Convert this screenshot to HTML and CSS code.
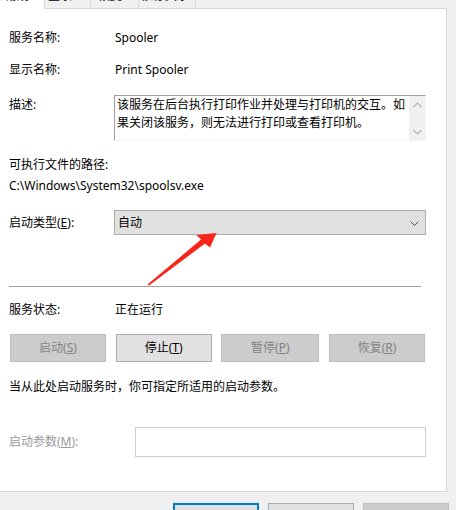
FILE: index.html
```html
<!DOCTYPE html>
<html lang="zh-CN">
<head>
<meta charset="utf-8">
<title>Print Spooler 的属性</title>
<link rel="stylesheet" href="styles.css">
</head>
<body>
<div class="window">
  <div class="tabs">
    <div class="tab tab-active"><span>常规</span></div>
    <div class="tab tab-2"><span>登录</span></div>
    <div class="tab tab-3"><span>恢复</span></div>
    <div class="tab tab-4"><span>依存关系</span></div>
    <div class="tab-fill"></div>
  </div>
  <div class="panel">
    <div class="row row-name"><div class="label">服务名称:</div><div class="value">Spooler</div></div>
    <div class="row row-display"><div class="label">显示名称:</div><div class="value">Print Spooler</div></div>
    <div class="row row-desc">
      <div class="label">描述:</div>
      <div class="desc-box">
        <div class="desc-text">该服务在后台执行打印作业并处理与打印机的交互。如<br>果关闭该服务，则无法进行打印或查看打印机。</div>
        <div class="scrollbar">
          <div class="sb-btn"><svg width="9" height="6" viewBox="0 0 9 6"><polyline points="0.5,5 4.5,1 8.5,5" fill="none" stroke="#b4b4b4" stroke-width="1.2"/></svg></div>
          <div class="sb-btn"><svg width="9" height="6" viewBox="0 0 9 6"><polyline points="0.5,1 4.5,5 8.5,1" fill="none" stroke="#b4b4b4" stroke-width="1.2"/></svg></div>
        </div>
      </div>
    </div>
    <div class="path-label">可执行文件的路径:</div>
    <div class="path-value">C:\Windows\System32\spoolsv.exe</div>
    <div class="row row-type">
      <div class="label">启动类型(<u>E</u>):</div>
      <div class="combo">
        <span class="combo-text">自动</span>
        <svg class="chev" width="9" height="5" viewBox="0 0 9 5"><polyline points="0.5,0.5 4.5,4.5 8.5,0.5" fill="none" stroke="#505050" stroke-width="1"/></svg>
      </div>
    </div>
    <div class="separator"></div>
    <div class="row row-status"><div class="label">服务状态:</div><div class="value">正在运行</div></div>
    <div class="btn-row">
      <div class="btn btn-disabled">启动(<u>S</u>)</div>
      <div class="btn">停止(<u>T</u>)</div>
      <div class="btn btn-disabled btn-wide">暂停(<u>P</u>)</div>
      <div class="btn btn-disabled">恢复(<u>R</u>)</div>
    </div>
    <div class="hint">当从此处启动服务时，你可指定所适用的启动参数。</div>
    <div class="row row-param">
      <div class="label label-param">启动参数(<u>M</u>):</div>
      <div class="param-input"></div>
    </div>
  </div>
  <div class="footer">
    <div class="fbtn fbtn-primary">确定</div>
    <div class="fbtn">取消</div>
    <div class="fbtn fbtn-disabled">应用(<u>A</u>)</div>
  </div>
  <svg class="annot-arrow" width="456" height="510" viewBox="0 0 456 510">
    <polygon points="147.5,284.5 201,239.5 196.5,235 216.5,233 210,247.5 205,243.5 149,285.5" fill="#f8261a"/>
  </svg>
</div>
</body>
</html>
```

FILE: styles.css
```css
* { box-sizing: border-box; }
html, body { margin: 0; padding: 0; }
body {
  background: #f0f0f0;
  font-family: "Noto Sans", "Noto Sans CJK SC", sans-serif;
  font-size: 12px;
  color: #000;
  width: 456px;
  height: 510px;
  overflow: hidden;
}
u { text-decoration: underline; text-underline-offset: 1px; }

.window { position: relative; width: 456px; height: 510px; }

/* tabs (cut off at top) */
.tabs { display: flex; width: 447px; height: 9px; }
.tab {
  height: 9px;
  border-left: 1px solid #d9d9d9;
  border-bottom: 1px solid #d9d9d9;
  overflow: hidden;
  display: flex;
  justify-content: flex-start;
}
.tab span { display: block; line-height: 14px; margin-top: -11px; white-space: nowrap; }
.tab-active { width: 44px; background: #fff; border: none; padding-left: 5px; }
.tab-2 { width: 46px; padding-left: 3px; }
.tab-3 { width: 48px; padding-left: 7px; }
.tab-4 { width: 58px; padding-left: 2px; border-right: 1px solid #d9d9d9; }
.tab-fill { flex: 1; border-bottom: 1px solid #d9d9d9; }

/* main panel */
.panel {
  width: 447px;
  height: 483px;
  background: #fff;
  border-right: 1px solid #d9d9d9;
  border-bottom: 1px solid #d9d9d9;
  padding: 19px 0 0 9px;
}
.row { display: flex; align-items: center; }
.label { width: 105px; flex: none; line-height: 20px; white-space: nowrap; }
.value { line-height: 20px; padding-left: 1px; white-space: nowrap; }
.row-display { margin-top: 12px; }

.row-desc { margin-top: 15px; align-items: flex-start; }
.row-desc .label { line-height: 18px; margin-top: 1px; }
.desc-box {
  width: 312px;
  height: 46px;
  display: flex;
  border: 1px solid;
  border-color: #a0a0a0 #f4f4f4 #f4f4f4 #a0a0a0;
}
.desc-text { flex: 1; padding-left: 2px; line-height: 18px; white-space: nowrap; overflow: hidden; }
.scrollbar {
  width: 16px;
  flex: none;
  background: #f0f0f0;
  display: flex;
  flex-direction: column;
  justify-content: space-between;
}
.sb-btn { height: 17px; display: flex; align-items: center; justify-content: center; }
.sb-btn svg { display: block; }

.path-label { margin-top: 14px; line-height: 20px; }
.path-value { margin-top: 1px; line-height: 20px; }

.row-type { margin-top: 14px; }
.combo {
  width: 312px;
  height: 25px;
  background: #e1e1e1;
  border: 1px solid #adadad;
  display: flex;
  align-items: center;
  justify-content: space-between;
  padding: 0 6px 0 3px;
}
.combo-text { line-height: 20px; }
.chev { display: block; margin-top: 1px; }

.separator { margin-top: 51px; width: 412px; height: 1px; background: #a0a0a0; }

.row-status { margin-top: 13px; }

.btn-row {
  margin-top: 14px;
  margin-left: 1px;
  width: 415px;
  display: flex;
  justify-content: space-between;
}
.btn {
  width: 96px;
  height: 28px;
  background: #e1e1e1;
  border: 1px solid #adadad;
  display: flex;
  align-items: center;
  justify-content: center;
  line-height: 20px;
}
.btn-wide { width: 98px; }
.btn-disabled { background: #cccccc; border-color: #bfbfbf; color: #838383; }

.hint { margin-top: 15px; line-height: 20px; }

.row-param { margin-top: 30px; }
.label-param { width: 126px; color: #9a9a9a; }
.param-input { width: 291px; height: 30px; border: 1px solid #cccccc; background: #fff; }

/* bottom buttons */
.footer {
  margin-top: 11px;
  display: flex;
  justify-content: flex-end;
  gap: 9px;
  padding-right: 7px;
}
.fbtn {
  width: 86px;
  height: 30px;
  background: #e1e1e1;
  border: 1px solid #adadad;
  display: flex;
  align-items: center;
  justify-content: center;
  line-height: 20px;
}
.fbtn-primary { border: 2px solid #0078d7; }
.fbtn-disabled { background: #cccccc; border-color: #bfbfbf; color: #838383; }

/* red annotation arrow overlay */
.annot-arrow { position: absolute; left: 0; top: 0; pointer-events: none; }
```
